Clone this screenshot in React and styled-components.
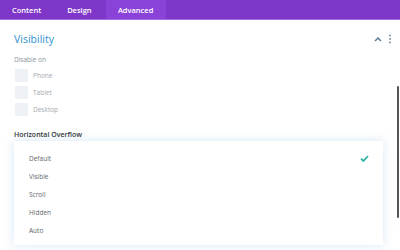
import React from 'react'
import styled, { createGlobalStyle } from 'styled-components'

const Global = createGlobalStyle`
  html, body {
    margin: 0;
    padding: 0;
    background: #fff;
    font-family: "Open Sans", "Liberation Sans", sans-serif;
  }
`

const tabs = ['Content', 'Design', 'Advanced']
const devices = ['Phone', 'Tablet', 'Desktop']
const options = ['Default', 'Visible', 'Scroll', 'Hidden', 'Auto']

function App() {
  return (
    <Page>
      <Global />
      <TabBar>
        {tabs.map(t => (
          <Tab key={t} active={t === 'Advanced'}>{t}</Tab>
        ))}
      </TabBar>
      <Body>
        <Header>
          <Title>Visibility</Title>
          <Actions>
            <svg width="8" height="6" viewBox="0 0 8 6">
              <path d="M1 5 L4 2 L7 5" fill="none" stroke="#5d7c96" strokeWidth="1.5" />
            </svg>
            <svg width="4" height="10" viewBox="0 0 4 10">
              <circle cx="2" cy="1.5" r="0.9" fill="#6d8aa2" />
              <circle cx="2" cy="5" r="0.9" fill="#6d8aa2" />
              <circle cx="2" cy="8.5" r="0.9" fill="#6d8aa2" />
            </svg>
          </Actions>
        </Header>
        <SmallLabel>Disable on</SmallLabel>
        <CheckList>
          {devices.map(d => (
            <CheckRow key={d}>
              <Box />
              <CheckText>{d}</CheckText>
            </CheckRow>
          ))}
        </CheckList>
        <FieldLabel>Horizontal Overflow</FieldLabel>
        <Menu>
          {options.map(o => (
            <Option key={o}>
              <span>{o}</span>
              {o === 'Default' && (
                <svg width="9" height="7" viewBox="0 0 9 7">
                  <path d="M1 3.6 L3.4 6 L8 1" fill="none" stroke="#2bb3a0" strokeWidth="1.8" />
                </svg>
              )}
            </Option>
          ))}
        </Menu>
      </Body>
      <ScrollThumb />
    </Page>
  )
}

export default App

const Page = styled.div`
  position: relative;
  width: 400px;
  height: 250px;
  overflow: hidden;
  background: #fff;
`

const TabBar = styled.div`
  display: flex;
  height: 19px;
  background: #7e37c8;
  border-bottom: 1px solid #a56ee0;
`

const Tab = styled.div`
  display: flex;
  align-items: center;
  justify-content: center;
  padding: 0 12px;
  margin-right: ${p => (p.active ? '0' : '2px')};
  min-width: ${p => (p.active ? '36px' : 'auto')};
  background: ${p => (p.active ? '#8a42d9' : 'transparent')};
  color: #fff;
  font-size: 7.5px;
  font-weight: 600;
`

const Body = styled.div`
  padding: 10px 14px 0 14px;
`

const Header = styled.div`
  display: flex;
  align-items: center;
  justify-content: space-between;
  height: 18px;
  margin-right: -6px;
`

const Title = styled.div`
  color: #2f8fd0;
  font-size: 10.5px;
  font-weight: 400;
`

const Actions = styled.div`
  display: flex;
  align-items: center;
  gap: 6px;
`

const SmallLabel = styled.div`
  margin-top: 7px;
  font-size: 6.5px;
  color: #8c949c;
`

const CheckList = styled.div`
  display: flex;
  flex-direction: column;
  gap: 4px;
  margin-top: 5px;
  padding-left: 1px;
`

const CheckRow = styled.div`
  display: flex;
  align-items: center;
  gap: 5px;
`

const Box = styled.div`
  width: 13px;
  height: 13px;
  background: #eef2f6;
  border-radius: 1px;
`

const CheckText = styled.span`
  font-size: 6.5px;
  color: #a3a9b0;
`

const FieldLabel = styled.div`
  margin-top: 14px;
  font-size: 7px;
  font-weight: 600;
  color: #32373c;
`

const Menu = styled.div`
  margin-top: 2px;
  width: 369px;
  background: #fff;
  box-shadow: 0 0 10px rgba(140, 190, 230, 0.35);
  padding: 8px 0 6px;
`

const Option = styled.div`
  display: flex;
  align-items: center;
  justify-content: space-between;
  height: 18px;
  padding: 0 14px 0 15px;
  font-size: 6.5px;
  color: #5f666d;
`

const ScrollThumb = styled.div`
  position: absolute;
  right: 1px;
  top: 86px;
  width: 2px;
  height: 132px;
  background: #555;
  border-radius: 1px;
`
